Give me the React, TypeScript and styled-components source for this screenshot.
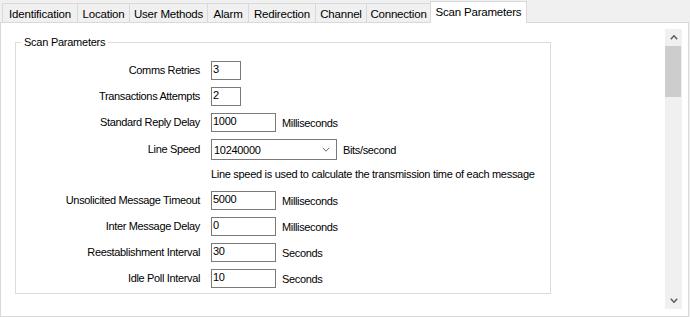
import React from "react";
import styled, { createGlobalStyle } from "styled-components";

const GlobalStyle = createGlobalStyle`
  html, body {
    margin: 0;
    padding: 0;
    background: #f0f0f0;
  }
  body {
    font-family: "Liberation Sans", Arial, sans-serif;
    font-size: 11px;
    color: #000;
  }
`;

const Window = styled.div`
  width: 690px;
  height: 317px;
  display: flex;
  flex-direction: column;
  background: #f0f0f0;
  overflow: hidden;
`;

const TabStrip = styled.div`
  display: flex;
  align-items: flex-end;
  height: 22px;
  padding-left: 2px;
  position: relative;
  z-index: 2;
`;

const Tab = styled.div<{ $w: number; $active?: boolean }>`
  box-sizing: border-box;
  width: ${(p) => p.$w}px;
  height: ${(p) => (p.$active ? 22 : 19)}px;
  margin-bottom: ${(p) => (p.$active ? -1 : 0)}px;
  border: 1px solid #d9d9d9;
  border-bottom: none;
  border-right: ${(p) => (p.$active ? "1px solid #d9d9d9" : "none")};
  background: ${(p) => (p.$active ? "#ffffff" : "#f0f0f0")};
  display: flex;
  justify-content: center;
  align-items: ${(p) => (p.$active ? "flex-start" : "center")};
  padding-top: ${(p) => (p.$active ? 4 : 1)}px;
  font-size: 11.5px;
  letter-spacing: -0.2px;
  white-space: nowrap;
  color: #000;
`;

const Panel = styled.div`
  box-sizing: border-box;
  width: 689px;
  height: 295px;
  border: 1px solid #d9d9d9;
  background: #ffffff;
  display: flex;
`;

const Content = styled.div`
  flex: 1;
  padding: 13px 0 0 14px;
`;

const GroupBox = styled.fieldset`
  box-sizing: border-box;
  width: 536px;
  margin: 0;
  padding: 12px 0 5px 5px;
  border: 1px solid #dcdcdc;
  min-width: 0;
`;

const Legend = styled.legend`
  padding: 0 3px;
  line-height: 13px;
  font-size: 11px;
  letter-spacing: -0.25px;
`;

const Rows = styled.div`
  display: flex;
  flex-direction: column;
  gap: 7px;
`;

const Row = styled.div<{ $h?: number }>`
  display: flex;
  align-items: center;
  height: ${(p) => p.$h ?? 19}px;
`;

const Label = styled.div`
  width: 179px;
  margin-right: 11px;
  text-align: right;
  white-space: nowrap;
  letter-spacing: -0.35px;
  line-height: 13px;
`;

const TextBox = styled.div<{ $w: number }>`
  box-sizing: border-box;
  width: ${(p) => p.$w}px;
  height: 19px;
  border: 1px solid #7a7a7a;
  background: #fff;
  padding: 1px 0 0 1px;
  line-height: 13px;
  letter-spacing: -0.3px;
`;

const Combo = styled.div`
  box-sizing: border-box;
  width: 126px;
  height: 21px;
  border: 1px solid #7a7a7a;
  background: #fff;
  display: flex;
  align-items: center;
  justify-content: space-between;
  padding: 0 6px 0 2px;
  letter-spacing: -0.3px;
`;

const Unit = styled.div`
  margin-left: 6px;
  white-space: nowrap;
  letter-spacing: -0.35px;
`;

const Note = styled.div`
  height: 17px;
  padding: 1px 0 0 190px;
  box-sizing: border-box;
  line-height: 13px;
  white-space: nowrap;
  letter-spacing: -0.3px;
`;

const ScrollBar = styled.div`
  width: 17px;
  margin: 6px 6px 7px 0;
  background: #f0f0f0;
  display: flex;
  flex-direction: column;
`;

const ScrollButton = styled.div`
  height: 17px;
  display: flex;
  align-items: center;
  justify-content: center;
`;

const Thumb = styled.div`
  height: 51px;
  margin: 0 1px 0 0;
  background: #cdcdcd;
`;

const Track = styled.div`
  flex: 1;
`;

const Chevron = ({ up, color = "#606060", w = 8, h = 5, sw = 1.6 }: { up?: boolean; color?: string; w?: number; h?: number; sw?: number }) => (
  <svg width={w} height={h} viewBox={`0 0 ${w} ${h}`}>
    <polyline
      points={up ? `0.8,${h - 0.8} ${w / 2},0.8 ${w - 0.8},${h - 0.8}` : `0.8,0.8 ${w / 2},${h - 0.8} ${w - 0.8},0.8`}
      fill="none"
      stroke={color}
      strokeWidth={sw}
    />
  </svg>
);

const tabs: { name: string; w: number; active?: boolean }[] = [
  { name: "Identification", w: 75 },
  { name: "Location", w: 52 },
  { name: "User Methods", w: 78 },
  { name: "Alarm", w: 41 },
  { name: "Redirection", w: 67 },
  { name: "Channel", w: 51 },
  { name: "Connection", w: 64 },
  { name: "Scan Parameters", w: 97, active: true },
];

type Field = { label: string; value: string; w: number; unit?: string };

const topFields: Field[] = [
  { label: "Comms Retries", value: "3", w: 30 },
  { label: "Transactions Attempts", value: "2", w: 30 },
  { label: "Standard Reply Delay", value: "1000", w: 65, unit: "Milliseconds" },
];

const bottomFields: Field[] = [
  { label: "Unsolicited Message Timeout", value: "5000", w: 65, unit: "Milliseconds" },
  { label: "Inter Message Delay", value: "0", w: 65, unit: "Milliseconds" },
  { label: "Reestablishment Interval", value: "30", w: 65, unit: "Seconds" },
  { label: "Idle Poll Interval", value: "10", w: 65, unit: "Seconds" },
];

const FieldRow = ({ f }: { f: Field }) => (
  <Row>
    <Label>{f.label}</Label>
    <TextBox $w={f.w}>{f.value}</TextBox>
    {f.unit && <Unit>{f.unit}</Unit>}
  </Row>
);

export default function App() {
  return (
    <>
      <GlobalStyle />
      <Window>
        <TabStrip>
          {tabs.map((t) => (
            <Tab key={t.name} $w={t.w} $active={t.active}>
              {t.name}
            </Tab>
          ))}
        </TabStrip>
        <Panel>
          <Content>
            <GroupBox>
              <Legend>Scan Parameters</Legend>
              <Rows>
                {topFields.map((f) => (
                  <FieldRow key={f.label} f={f} />
                ))}
                <Row $h={21}>
                  <Label>Line Speed</Label>
                  <Combo>
                    <span>10240000</span>
                    <Chevron color="#6d6d6d" w={8} h={5} sw={1} />
                  </Combo>
                  <Unit>Bits/second</Unit>
                </Row>
                <Note>Line speed is used to calculate the transmission time of each message</Note>
                {bottomFields.map((f) => (
                  <FieldRow key={f.label} f={f} />
                ))}
              </Rows>
            </GroupBox>
          </Content>
          <ScrollBar>
            <ScrollButton>
              <Chevron up />
            </ScrollButton>
            <Thumb />
            <Track />
            <ScrollButton>
              <Chevron />
            </ScrollButton>
          </ScrollBar>
        </Panel>
      </Window>
    </>
  );
}
